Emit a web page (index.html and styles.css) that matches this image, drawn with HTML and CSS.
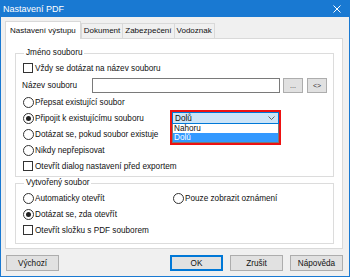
FILE: index.html
```html
<!DOCTYPE html>
<html lang="cs">
<head>
    <meta charset="UTF-8">
    <title>Nastavení PDF</title>
    <link rel="stylesheet" href="styles.css">
</head>
<body>
    <div class="window">
        <div class="titlebar">
            <span class="title">Nastavení PDF</span>
            <svg class="close" viewBox="0 0 8 8"><path d="M0.5 0.5L7.5 7.5M7.5 0.5L0.5 7.5" stroke="#fff" stroke-width="1"></path></svg>
        </div>

        <div class="body">
            <div class="tabs">
                <div class="tab active">Nastavení výstupu</div>
                <div class="tab">Dokument</div>
                <div class="tab">Zabezpečení</div>
                <div class="tab">Vodoznak</div>
            </div>

            <div class="panel">
                <fieldset class="group first">
                    <legend>Jméno souboru</legend>
                    <div class="row"><span class="check"></span>Vždy se dotázat na název souboru</div>
                    <div class="row name-row">
                        <span class="label">Název souboru</span>
                        <span class="input"></span>
                        <span class="mini-btn">...</span>
                        <span class="mini-btn">&lt;&gt;</span>
                    </div>
                    <div class="row"><span class="radio"></span>Přepsat existující soubor</div>
                    <div class="row combo-row">
                        <span class="radio checked"></span>Připojit k existujícímu souboru
                        <div class="combo">
                            <div class="select">
                                <span>Dolů</span>
                                <svg class="chevron" viewBox="0 0 7 4"><path d="M0.5 0.5L3.5 3.5L6.5 0.5" fill="none" stroke="#555" stroke-width="0.9"></path></svg>
                            </div>
                            <div class="list">
                                <div class="option">Nahoru</div>
                                <div class="option selected">Dolů</div>
                            </div>
                        </div>
                    </div>
                    <div class="row"><span class="radio"></span>Dotázat se, pokud soubor existuje</div>
                    <div class="row"><span class="radio"></span>Nikdy nepřepisovat</div>
                    <div class="row"><span class="check"></span>Otevřít dialog nastavení před exportem</div>
                </fieldset>

                <fieldset class="group second">
                    <legend>Vytvořený soubor</legend>
                    <div class="row split">
                        <span class="half"><span class="radio"></span>Automaticky otevřít</span>
                        <span class="half"><span class="radio"></span>Pouze zobrazit oznámení</span>
                    </div>
                    <div class="row"><span class="radio checked"></span>Dotázat se, zda otevřít</div>
                    <div class="row"><span class="check"></span>Otevřít složku s PDF souborem</div>
                </fieldset>
            </div>

            <div class="buttons">
                <button class="btn">Výchozí</button>
                <div class="spacer"></div>
                <button class="btn default">OK</button>
                <button class="btn">Zrušit</button>
                <button class="btn">Nápověda</button>
            </div>
        </div>
    </div>
</body>
</html>
```

FILE: styles.css
```css
* { margin: 0; padding: 0; box-sizing: border-box; }
body {
    font-family: "Liberation Sans", Arial, sans-serif;
    font-size: 8.2px;
    color: #111;
    background: #fff;
}
.window {
    width: 350px;
    height: 277px;
    background: #f0f0f0;
    border: 1px solid #1979d2;
    border-top: none;
}
.titlebar {
    height: 17px;
    margin: 0 -1px;
    background: #1979d2;
    color: #fff;
    display: flex;
    align-items: center;
    padding: 0 9px 0 3px;
}
.title {
    font-size: 9px;
    flex: 1;
}
.close {
    width: 8px;
    height: 8px;
}
.body {
    height: 259px;
    padding: 4px 6px 0 4px;
}
.tabs {
    display: flex;
    height: 17px;
    align-items: flex-end;
    font-size: 8px;
}
.tab {
    height: 15px;
    line-height: 13px;
    padding: 0 2px;
    border: 1px solid #d9d9d9;
    border-bottom: none;
    background: #f0f0f0;
    margin-left: -1px;
}
.tab.active {
    height: 18px;
    line-height: 17px;
    padding: 0 4px 0 4px;
    background: #fff;
    margin-left: 0;
    margin-bottom: -1px;
    margin-right: 1px;
    position: relative;
    z-index: 1;
}
.panel {
    height: 211px;
    background: #fff;
    border: 1px solid #d9d9d9;
    padding: 9px 8px 0 9px;
}
.group {
    border: 1px solid #dcdcdc;
    padding: 2px 6px 0 7px;
}
.group legend {
    line-height: 10px;
    padding: 0 2px;
    margin-left: 1px;
}
.group.first {
    height: 129px;
}
.group.second {
    margin-top: 1px;
    height: 66px;
}
.row {
    height: 16px;
    display: flex;
    align-items: center;
    white-space: nowrap;
}
.name-row {
    height: 18px;
}
.combo-row {
    position: relative;
}
.check {
    width: 10px;
    height: 10px;
    border: 1px solid #333;
    background: #fff;
    margin-right: 2px;
    flex: none;
}
.radio {
    width: 11px;
    height: 11px;
    border: 1px solid #333;
    border-radius: 50%;
    background: #fff;
    margin-right: 1px;
    flex: none;
    display: flex;
    align-items: center;
    justify-content: center;
}
.radio.checked::after {
    content: "";
    width: 5px;
    height: 5px;
    border-radius: 50%;
    background: #222;
}
.label {
    width: 70px;
    margin-left: -1px;
}
.input {
    width: 188px;
    height: 15px;
    border: 1px solid #7a7a7a;
    background: #fff;
}
.mini-btn {
    width: 20px;
    height: 15px;
    margin-left: 3px;
    border: 1px solid #adadad;
    background: #e1e1e1;
    display: flex;
    align-items: center;
    justify-content: center;
    font-size: 7px;
    color: #333;
}
.mini-btn + .mini-btn {
    margin-left: 4px;
}
.split .half {
    display: flex;
    align-items: center;
    width: 150px;
}
.combo {
    position: absolute;
    left: 147px;
    top: 0;
    width: 111px;
    border: 2px solid #ee1111;
    background: #fff;
}
.select {
    height: 12px;
    border: 1px solid #0078d7;
    background: #cce4f7;
    display: flex;
    align-items: center;
    padding: 0 3px 0 2px;
    justify-content: space-between;
}
.chevron {
    width: 7px;
    height: 4px;
}
.list {
    border: 1px solid #7a7a7a;
    border-top: none;
}
.option {
    height: 9px;
    line-height: 9px;
    padding-left: 1px;
}
.option.selected {
    background: #3399ff;
    color: #fff;
}
.buttons {
    display: flex;
    margin-top: 6px;
    gap: 6px;
}
.spacer {
    flex: 1;
}
.btn {
    width: 53px;
    height: 16px;
    border: 1px solid #adadad;
    background: #e1e1e1;
    font-family: inherit;
    font-size: 8.2px;
    color: #111;
    margin-left: 1px;
}
.btn.default {
    border: 1px solid #0078d7;
    box-shadow: inset 0 0 0 1px #0078d7;
}
```
